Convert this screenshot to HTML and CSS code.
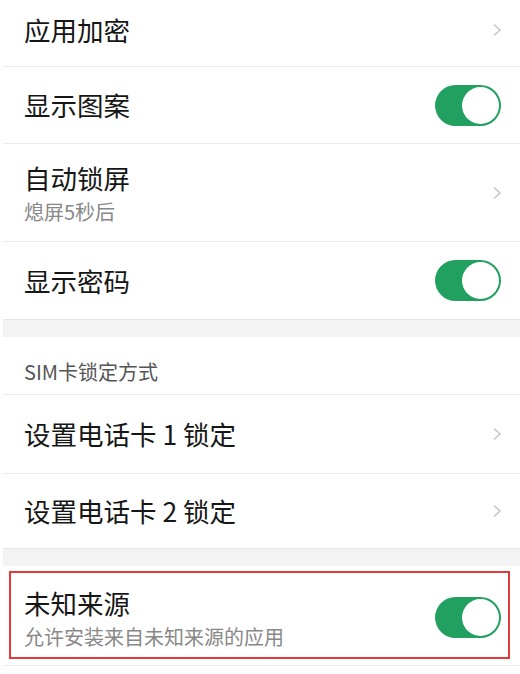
FILE: index.html
```html
<!DOCTYPE html>
<html lang="zh-CN">
<head>
<meta charset="utf-8">
<title>设置</title>
<link rel="stylesheet" href="styles.css">
</head>
<body>
<div class="screen">
  <div class="item item-first">
    <div class="title">应用加密</div>
    <svg class="chev" width="10" height="14" viewBox="0 0 10 14"><polyline points="2,1.5 8,7 2,12.5" fill="none" stroke="#c6c6c6" stroke-width="1.6"/></svg>
  </div>
  <div class="item">
    <div class="title">显示图案</div>
    <div class="toggle"><div class="knob"></div></div>
  </div>
  <div class="item item-tall">
    <div class="texts">
      <div class="title">自动锁屏</div>
      <div class="sub">熄屏5秒后</div>
    </div>
    <svg class="chev" width="10" height="14" viewBox="0 0 10 14"><polyline points="2,1.5 8,7 2,12.5" fill="none" stroke="#c6c6c6" stroke-width="1.6"/></svg>
  </div>
  <div class="item item-last">
    <div class="title">显示密码</div>
    <div class="toggle"><div class="knob"></div></div>
  </div>
  <div class="band"></div>
  <div class="header">SIM卡锁定方式</div>
  <div class="item item-sim1">
    <div class="title">设置电话卡 1 锁定</div>
    <svg class="chev" width="10" height="14" viewBox="0 0 10 14"><polyline points="2,1.5 8,7 2,12.5" fill="none" stroke="#c6c6c6" stroke-width="1.6"/></svg>
  </div>
  <div class="item item-sim2 item-last">
    <div class="title">设置电话卡 2 锁定</div>
    <svg class="chev" width="10" height="14" viewBox="0 0 10 14"><polyline points="2,1.5 8,7 2,12.5" fill="none" stroke="#c6c6c6" stroke-width="1.6"/></svg>
  </div>
  <div class="band"></div>
  <div class="item-boxed">
    <div class="highlight">
      <div class="texts">
        <div class="title">未知来源</div>
        <div class="sub">允许安装来自未知来源的应用</div>
      </div>
      <div class="toggle"><div class="knob"></div></div>
    </div>
  </div>
</div>
</body>
</html>
```
FILE: styles.css
```css
* { box-sizing: border-box; }
html, body { margin: 0; padding: 0; background: #ffffff; }
body {
  font-family: "Noto Sans CJK SC", "Noto Sans", sans-serif;
  color: #1b1b1b;
  width: 520px;
  height: 674px;
  overflow: hidden;
}
.screen {
  padding-left: 3px;
}
.item {
  display: flex;
  align-items: center;
  justify-content: space-between;
  height: 77px;
  padding: 0 19px 0 21px;
  border-bottom: 1px solid #ebebeb;
  background: #fff;
}
.item-first {
  height: 67px;
  padding-bottom: 6px;
}
.item-tall { height: 98px; }
.item-last { border-bottom: none; }
.item-sim1 { height: 79px; }
.item-sim2 { height: 74px; }
.title {
  font-size: 26.5px;
  line-height: 34px;
  color: #161616;
}
.texts {
  display: flex;
  flex-direction: column;
  padding-top: 2px;
}
.sub {
  font-size: 20px;
  line-height: 28px;
  margin-top: 3px;
  color: #888888;
}
.chev {
  display: block;
  margin-right: -1px;
}
.toggle {
  width: 66px;
  height: 41px;
  border-radius: 21px;
  background: #22a05f;
  padding: 2px;
  display: flex;
  justify-content: flex-end;
}
.knob {
  width: 37px;
  height: 37px;
  border-radius: 50%;
  background: #ffffff;
}
.band {
  height: 18px;
  background: #f3f3f3;
  border-top: 1px solid #e6e6e6;
}
.header {
  height: 58px;
  padding: 21px 0 0 21px;
  font-size: 20px;
  line-height: 28px;
  color: #555555;
  border-bottom: 1px solid #ebebeb;
}
.item-boxed {
  height: 100px;
  padding: 5px 10px 6px 6px;
  border-bottom: 1px solid #ebebeb;
}
.highlight {
  height: 88px;
  border: 2px solid #e53a3a;
  display: flex;
  align-items: center;
  justify-content: space-between;
  padding: 4px 7px 0 13px;
}
```
